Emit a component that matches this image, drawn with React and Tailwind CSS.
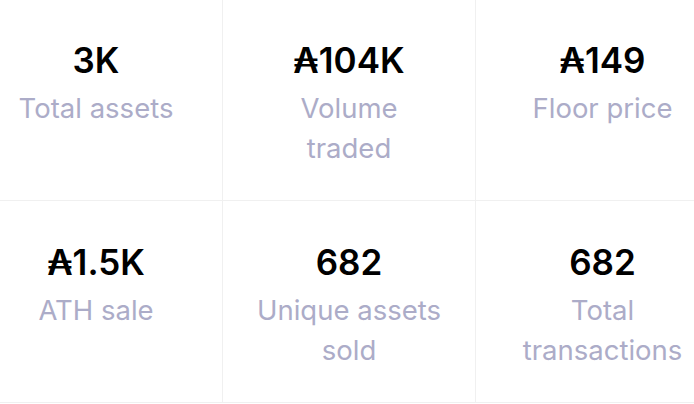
import React from "react";

const stats = [
  { value: "3K", label: "Total assets" },
  { value: "₳104K", label: "Volume traded" },
  { value: "₳149", label: "Floor price" },
  { value: "₳1.5K", label: "ATH sale" },
  { value: "682", label: "Unique assets sold" },
  { value: "682", label: "Total transactions" },
];

export default function App() {
  return (
    <div
      className="w-[694px] h-[404px] overflow-hidden bg-white"
      style={{ fontFamily: "Inter, 'DejaVu Sans', sans-serif" }}
    >
      <div className="ml-[-30px] w-[759px] grid grid-cols-[253px_253px_253px] gap-0">
        {stats.map((s, i) => (
          <div
            key={i}
            className={`${i < 3 ? "h-[201px] pt-[40px]" : "h-[202px] pt-[41px]"} border-b border-[#f0f0f0] ${i % 3 !== 2 ? "border-r" : ""} flex flex-col items-center text-center`}
          >
            <div className="text-[35px] leading-[40px] font-semibold text-black">
              {s.value}
            </div>
            <div className="mt-[8px] text-[27.5px] leading-[40px] text-[#acacc8] max-w-[185px]">
              {s.label}
            </div>
          </div>
        ))}
      </div>
    </div>
  );
}
